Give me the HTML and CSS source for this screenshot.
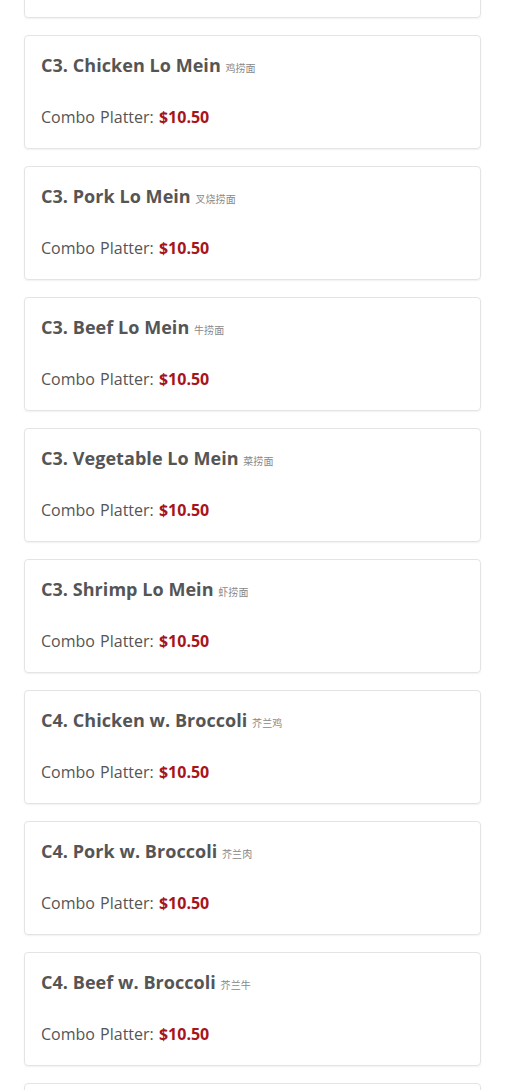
FILE: index.html
```html
<!DOCTYPE html>
<html lang="en">
<head>
<meta charset="utf-8">
<title>Combo Platters</title>
<link rel="stylesheet" href="styles.css">
</head>
<body>
<div class="menu">
  <div class="item">
    <h3 class="item-name">C2. Shrimp Egg Foo Young <span class="zh">虾蛋芙蓉</span></h3>
    <p class="item-price">Combo Platter: <strong>$10.50</strong></p>
  </div>
  <div class="item">
    <h3 class="item-name">C3. Chicken Lo Mein <span class="zh">鸡捞面</span></h3>
    <p class="item-price">Combo Platter: <strong>$10.50</strong></p>
  </div>
  <div class="item">
    <h3 class="item-name">C3. Pork Lo Mein <span class="zh">叉烧捞面</span></h3>
    <p class="item-price">Combo Platter: <strong>$10.50</strong></p>
  </div>
  <div class="item">
    <h3 class="item-name">C3. Beef Lo Mein <span class="zh">牛捞面</span></h3>
    <p class="item-price">Combo Platter: <strong>$10.50</strong></p>
  </div>
  <div class="item">
    <h3 class="item-name">C3. Vegetable Lo Mein <span class="zh">菜捞面</span></h3>
    <p class="item-price">Combo Platter: <strong>$10.50</strong></p>
  </div>
  <div class="item">
    <h3 class="item-name">C3. Shrimp Lo Mein <span class="zh">虾捞面</span></h3>
    <p class="item-price">Combo Platter: <strong>$10.50</strong></p>
  </div>
  <div class="item">
    <h3 class="item-name">C4. Chicken w. Broccoli <span class="zh">芥兰鸡</span></h3>
    <p class="item-price">Combo Platter: <strong>$10.50</strong></p>
  </div>
  <div class="item">
    <h3 class="item-name">C4. Pork w. Broccoli <span class="zh">芥兰肉</span></h3>
    <p class="item-price">Combo Platter: <strong>$10.50</strong></p>
  </div>
  <div class="item">
    <h3 class="item-name">C4. Beef w. Broccoli <span class="zh">芥兰牛</span></h3>
    <p class="item-price">Combo Platter: <strong>$10.50</strong></p>
  </div>
  <div class="item">
    <h3 class="item-name">C4. Shrimp w. Broccoli <span class="zh">芥兰虾</span></h3>
    <p class="item-price">Combo Platter: <strong>$10.50</strong></p>
  </div>
</div>
</body>
</html>
```
FILE: styles.css
```css
html, body {
  margin: 0;
  padding: 0;
  background: #fff;
}
body {
  font-family: "Open Sans", "Noto Sans CJK SC", sans-serif;
  color: #555;
  overflow: hidden;
  height: 1090px;
}
.menu {
  display: flex;
  flex-direction: column;
  gap: 17px;
  margin-top: -96px;
  padding: 0 29px 0 24px;
}
.item {
  border: 1px solid #e4e4e4;
  border-radius: 4px;
  box-shadow: 0 1px 2px rgba(0, 0, 0, 0.06);
  padding: 17px 16px 0;
  box-sizing: border-box;
  height: 114px;
}
.item-name {
  margin: 0 0 25px;
  font-size: 18px;
  font-weight: 700;
  line-height: 24.5px;
  color: #555;
  letter-spacing: 0.05px;
}
.zh {
  font-family: "Noto Sans CJK SC", sans-serif;
  font-size: 10px;
  font-weight: 400;
  color: #888;
}
.item-price {
  margin: 0;
  font-size: 16px;
  line-height: 22px;
  color: #555;
  word-spacing: 1px;
}
.item-price strong {
  color: #a8141b;
  font-weight: 700;
}
```
